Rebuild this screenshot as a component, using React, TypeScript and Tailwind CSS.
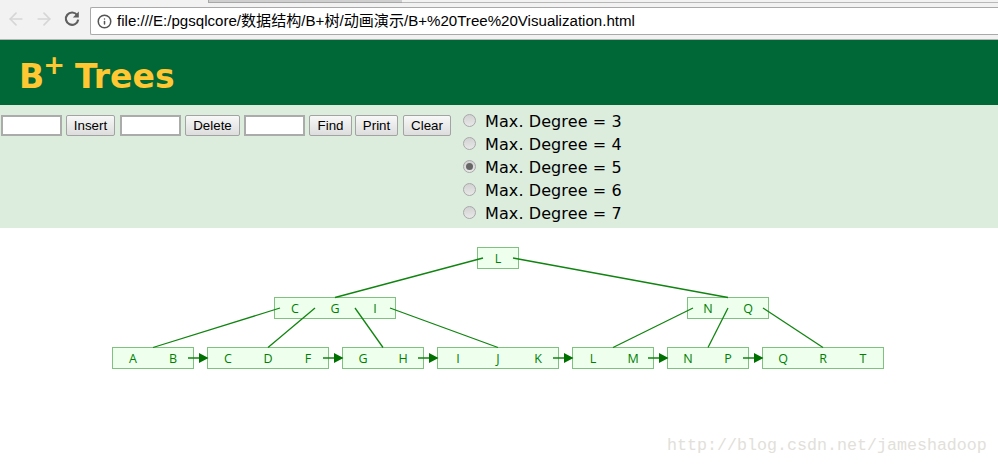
import { ArrowLeft, ArrowRight, Info } from "lucide-react";

const inputClass = "h-[21px] w-[61px] border-2 border-[#ababab] bg-white";
const buttonClass =
  "flex h-[21px] items-center justify-center rounded-[2px] border border-[#a3a3a3] bg-gradient-to-b from-[#f8f8f8] to-[#dddddd] text-[13.33px] text-black";

const nodes = [
  { x: 477, y: 247, w: 41, keys: ["L"] },
  { x: 274, y: 297, w: 121, keys: ["C", "G", "I"] },
  { x: 687, y: 297, w: 81, keys: ["N", "Q"] },
  { x: 112, y: 347, w: 81, keys: ["A", "B"] },
  { x: 207, y: 347, w: 121, keys: ["C", "D", "F"] },
  { x: 342, y: 347, w: 81, keys: ["G", "H"] },
  { x: 437, y: 347, w: 121, keys: ["I", "J", "K"] },
  { x: 572, y: 347, w: 81, keys: ["L", "M"] },
  { x: 667, y: 347, w: 81, keys: ["N", "P"] },
  { x: 762, y: 347, w: 121, keys: ["Q", "R", "T"] },
];

const edges = [
  [483, 258, 335, 297.5],
  [513, 258, 728, 297.5],
  [280, 308, 153, 347.5],
  [315, 308, 268, 347.5],
  [355, 308, 383, 347.5],
  [390, 308, 498, 347.5],
  [693, 308, 613, 347.5],
  [728, 308, 708, 347.5],
  [763, 308, 823, 347.5],
];

const arrows = [188, 323, 418, 553, 648, 743];
const degrees = [3, 4, 5, 6, 7];

const TreeDiagram = () => (
  <svg width="998" height="238" viewBox="0 228 998 238" className="block">
    {nodes.map((n) => (
      <g key={`${n.x}-${n.y}`}>
        <rect x={n.x + 0.5} y={n.y + 0.5} width={n.w} height={21} fill="#eeffee" stroke="#7fc17f" />
        {n.keys.map((k, i) => (
          <text
            key={k}
            x={n.x + 21 + i * 40}
            y={n.y + 15.5}
            textAnchor="middle"
            fontSize="12.5"
            fill="#008000"
            fontFamily="'Open Sans', sans-serif"
          >
            {k}
          </text>
        ))}
      </g>
    ))}
    {edges.map(([x1, y1, x2, y2]) => (
      <line key={`${x1}-${x2}`} x1={x1} y1={y1} x2={x2} y2={y2} stroke="#108410" strokeWidth="1.3" />
    ))}
    {arrows.map((x) => (
      <g key={x}>
        <line x1={x} y1={358} x2={x + 12} y2={358} stroke="#108410" strokeWidth="1.5" />
        <polygon points={`${x + 11},353 ${x + 20.5},358 ${x + 11},363`} fill="#007000" />
      </g>
    ))}
  </svg>
);

export default function App() {
  return (
    <div className="relative h-[466px] w-[998px] overflow-hidden bg-white font-['Liberation_Sans',sans-serif]">
      {/* browser toolbar */}
      <div className="relative flex h-[40px] items-start border-b border-[#b4b4b4] bg-[#f2f2f2] pt-[7px]">
        <div className="absolute left-[208px] top-0 h-[3px] w-[194px] border-b border-l border-[#a8a8a8] bg-[#cfcfcf]" />
        <div className="absolute left-[402px] right-0 top-[2px] h-px bg-[#b8b8b8]" />
        <div className="flex w-[90px] items-center pl-[6px] pt-[2px]">
          <ArrowLeft size={20} strokeWidth={2} className="text-[#d6d6d6]" />
          <ArrowRight size={20} strokeWidth={2} className="ml-[8px] text-[#d6d6d6]" />
          <svg width="18" height="18" viewBox="0 0 18 18" className="ml-[9px]" fill="none">
            <path d="M14.2 5.2A6.2 6.2 0 1 0 15.2 9.6" stroke="#5f5f5f" strokeWidth="2.2" />
            <path d="M15.8 1.6V7.6H9.8Z" fill="#5f5f5f" />
          </svg>
        </div>
        <div className="flex h-[28px] flex-1 items-center rounded-l-[2px] border border-r-0 border-[#a9a9a9] bg-white pl-[6px] font-['Liberation_Sans','Noto_Sans_CJK_SC',sans-serif] text-[15.08px] text-black">
          <Info size={15} strokeWidth={2.4} className="mr-[5px] text-[#555555]" />
          <span>file:///E:/pgsqlcore/数据结构/B+树/动画演示/B+%20Tree%20Visualization.html</span>
        </div>
      </div>

      {/* page header */}
      <div className="flex h-[65px] items-start bg-[#006837] pl-[19px] font-['DejaVu_Sans',sans-serif] text-[33px] font-bold leading-none text-[#ffc832]">
        <span className="mt-[20px]">B</span>
        <span className="mt-[12px] -ml-[1px] text-[26px] font-bold">+</span>
        <span className="ml-[10px] mt-[20px]">Trees</span>
      </div>

      {/* controls */}
      <div className="flex h-[123px] items-start bg-[#dcedde]">
        <div className="ml-px mt-[10px] flex items-center">
          <div className={inputClass} />
          <button className={`${buttonClass} ml-[4px] w-[49px]`}>Insert</button>
          <div className={`${inputClass} ml-[5px]`} />
          <button className={`${buttonClass} ml-[4px] w-[55px]`}>Delete</button>
          <div className={`${inputClass} ml-[4px]`} />
          <button className={`${buttonClass} ml-[4px] w-[43px]`}>Find</button>
          <button className={`${buttonClass} ml-[3px] w-[43px]`}>Print</button>
          <button className={`${buttonClass} ml-[5px] w-[48px]`}>Clear</button>
        </div>
        <div className="ml-[12px] mt-[5px] flex flex-col font-['DejaVu_Sans',sans-serif] text-[16px] text-black">
          {degrees.map((d) => (
            <div key={d} className="flex h-[23px] items-center">
              <span className="-mt-[2px] mr-[9px] flex size-[13px] items-center justify-center rounded-full border border-[#a8a8a8] bg-gradient-to-b from-[#d2d2d2] to-[#e8e8e8]">
                {d === 5 && <span className="size-[7px] rounded-full bg-[#666666]" />}
              </span>
              <span className="whitespace-pre tracking-[0.1px]">Max. Degree = {d}</span>
            </div>
          ))}
        </div>
      </div>

      <TreeDiagram />

      {/* blog watermark */}
      <div className="absolute left-[667px] top-[436px] font-['Liberation_Mono',monospace] text-[16.67px] leading-[20px] text-[#e2e0d9]">
        http://blog.csdn.net/jameshadoop
      </div>
    </div>
  );
}
